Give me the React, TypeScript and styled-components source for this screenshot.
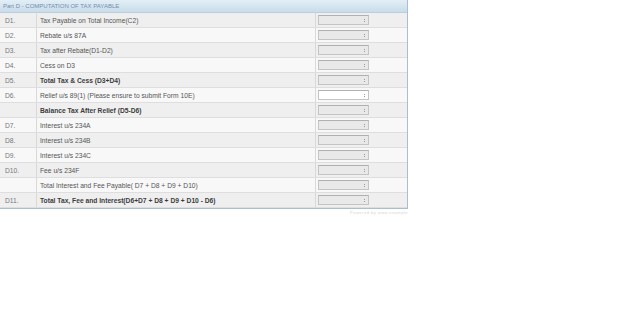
import styled, { createGlobalStyle } from "styled-components"

const Global = createGlobalStyle`
    body {
        margin: 0;
        background: #ffffff;
        font-family: "Liberation Sans", Arial, sans-serif;
    }
`

const Panel = styled.div`
    width: 407px;
    border-right: 1px solid #a8bfd3;
    border-bottom: 1px solid #a8bfd3;
    box-sizing: content-box;
`

const Header = styled.div`
    height: 12px;
    line-height: 12px;
    padding-left: 3px;
    font-size: 6px;
    color: #6f8fae;
    background: linear-gradient(#e3eef6, #c9dcea);
    border-bottom: 1px solid #b9cfe0;
`

const Row = styled.div<{ shade: boolean }>`
    display: grid;
    grid-template-columns: 37px 279px 1fr;
    height: 15px;
    background: ${p => (p.shade ? "#efefef" : "#f8f8f8")};
    border-bottom: 1px solid #dedede;
    box-sizing: border-box;
    font-size: 6.7px;
    color: #555;
`

const Code = styled.div`
    display: flex;
    align-items: center;
    padding-left: 5px;
    color: #777;
    border-right: 1px solid #d9d9d9;
`

const Label = styled.div<{ bold: boolean }>`
    display: flex;
    align-items: center;
    padding-left: 3px;
    font-weight: ${p => (p.bold ? 700 : 400)};
    color: ${p => (p.bold ? "#3c3c3c" : "#555")};
    white-space: nowrap;
    border-right: 1px solid #d9d9d9;
`

const Cell = styled.div`
    display: flex;
    align-items: center;
    padding-left: 2px;
`

const Input = styled.div<{ editable: boolean }>`
    position: relative;
    width: 51px;
    height: 10px;
    box-sizing: border-box;
    border: 1px solid #c4c4c4;
    border-top-color: #b0b0b0;
    background: ${p => (p.editable ? "#ffffff" : "#e9e9e9")};
    &::after {
        content: "";
        position: absolute;
        right: 2px;
        top: 3px;
        width: 1px;
        height: 3px;
        border-left: 1px dotted #9a9a9a;
    }
`

const Footnote = styled.div`
    width: 408px;
    text-align: right;
    font-size: 4px;
    color: #d4d4d4;
    padding-top: 1px;
    letter-spacing: 0.5px;
`

const rows = [
    { code: "D1.", label: "Tax Payable on Total Income(C2)" },
    { code: "D2.", label: "Rebate u/s 87A" },
    { code: "D3.", label: "Tax after Rebate(D1-D2)" },
    { code: "D4.", label: "Cess on D3" },
    { code: "D5.", label: "Total Tax & Cess (D3+D4)", bold: true },
    { code: "D6.", label: "Relief u/s 89(1) (Please ensure to submit Form 10E)", editable: true },
    { code: "", label: "Balance Tax After Relief (D5-D6)", bold: true },
    { code: "D7.", label: "Interest u/s 234A" },
    { code: "D8.", label: "Interest u/s 234B" },
    { code: "D9.", label: "Interest u/s 234C" },
    { code: "D10.", label: "Fee u/s 234F" },
    { code: "", label: "Total Interest and Fee Payable( D7 + D8 + D9 + D10)" },
    { code: "D11.", label: "Total Tax, Fee and Interest(D6+D7 + D8 + D9 + D10 - D6)", bold: true },
]

const App = () => {
    return (
        <>
            <Global />
            <Panel>
                <Header>Part D - COMPUTATION OF TAX PAYABLE</Header>
                {rows.map((r, i) => (
                    <Row key={i} shade={i % 2 === 0}>
                        <Code>{r.code}</Code>
                        <Label bold={!!r.bold}>{r.label}</Label>
                        <Cell>
                            <Input editable={!!r.editable} />
                        </Cell>
                    </Row>
                ))}
            </Panel>
            <Footnote>Powered by www.example</Footnote>
        </>
    )
}

export default App
